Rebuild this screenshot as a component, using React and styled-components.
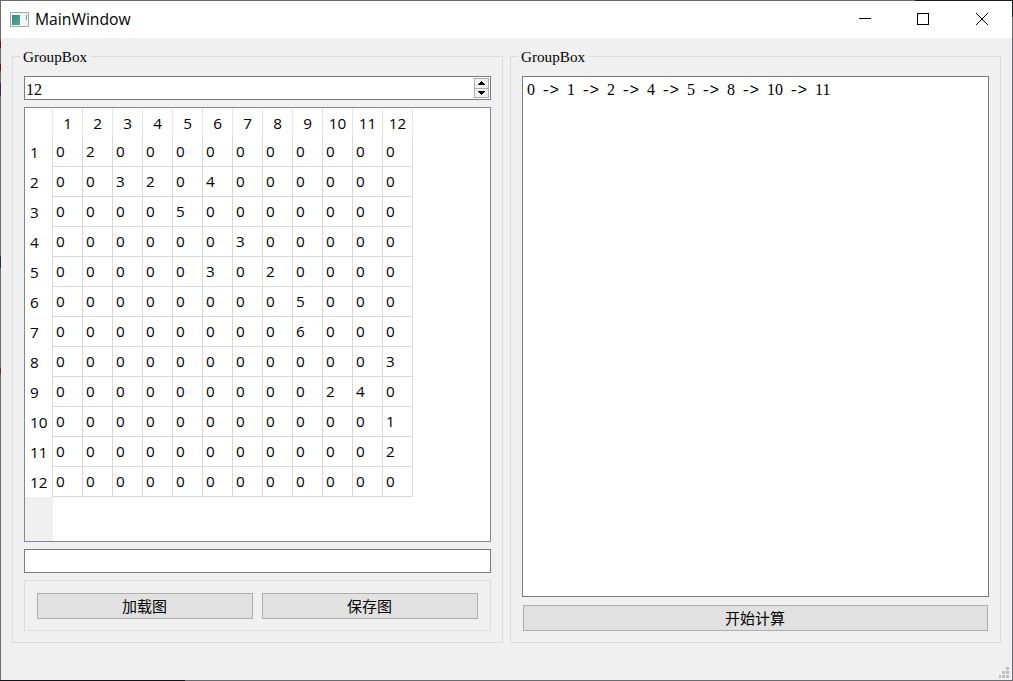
import React from "react";
import styled, { createGlobalStyle } from "styled-components";

const Global = createGlobalStyle`
  *, *::before, *::after { box-sizing: border-box; }
  html, body { margin: 0; padding: 0; overflow: hidden; }
`;

const uiFont = `"Open Sans", "Noto Sans", sans-serif`;
const songFont = `"Liberation Serif", "Noto Sans CJK SC", serif`;

const Frame = styled.div`
  width: 1013px;
  height: 681px;
  padding: 1px;
  color: #000;
  background:
    linear-gradient(90deg, #6b6b6d 0 915px, #1d1a1f 915px) 0 0 / 100% 1px no-repeat,
    linear-gradient(90deg, #141214 0 185px, #6b6b6d 185px) 0 100% / 100% 1px no-repeat,
    linear-gradient(#18191d 0 17px, #6b6b6d 17px) 100% 0 / 1px 100% no-repeat,
    linear-gradient(#6b6b6d 0 41px, #7c0c18 41px 48px, #6b6b6d 48px 64px, #7c0c18 64px 71px,
      #6b6b6d 71px 83px, #3c2850 83px 96px, #6b6b6d 96px 256px, #20305c 256px 268px,
      #6b6b6d 268px 368px, #6b3414 368px 374px, #6b6b6d 374px) 0 0 / 1px 100% no-repeat,
    #6b6b6d;
`;

const Window = styled.div`
  display: flex;
  flex-direction: column;
  height: 100%;
  background: #f0f0f0;
`;

const TitleBar = styled.header`
  display: flex;
  align-items: center;
  height: 37px;
  padding: 0 1px 0 9px;
  background: #fff;
`;

const Title = styled.h1`
  flex: 1;
  margin: 0 0 0 6px;
  font: 400 15.7px/37px ${uiFont};
`;

const CaptionButton = styled.button`
  display: grid;
  place-items: center;
  width: 58.5px;
  height: 37px;
  padding: 0 0 2px;
  border: 0;
  background: transparent;
`;

const Central = styled.main`
  display: flex;
  gap: 7px;
  padding: 18px 11px 0;
`;

const Group = styled.fieldset`
  display: flex;
  flex-direction: column;
  flex: 1;
  min-width: 0;
  height: 587px;
  margin: 0;
  padding: 19px 11px 11px;
  border: 1px solid #dcdcdc;
`;

const GroupTitle = styled.div`
  align-self: flex-start;
  height: 20px;
  margin: -29px 0 9px -4px;
  padding: 0 4px 0 3px;
  background: #f0f0f0;
  font: 15.2px/20px ${songFont};
`;

const SpinBox = styled.div`
  display: flex;
  justify-content: space-between;
  height: 24px;
  padding: 1px;
  border: 1px solid #7a7a7a;
  background: #fff;
  font: 16px/23px ${songFont};
`;

const SpinButtons = styled.div`
  display: flex;
  flex-direction: column;
  width: 15px;
  height: 20px;
  border: 1px solid #acacac;
`;

const SpinButton = styled.button`
  display: grid;
  place-items: center;
  flex: 1;
  padding: 0;
  border: 0;
  background: #f0f0f0;
  & + & { border-top: 1px solid #acacac; }
`;

const TableView = styled.div`
  display: grid;
  grid-template-rows: auto 1fr;
  height: 435px;
  margin-top: 7px;
  border: 1px solid #828790;
  background: #fff;
`;

const Matrix = styled.table`
  width: 388px;
  table-layout: fixed;
  border-collapse: separate;
  border-spacing: 0;
  font: 15.3px/20px ${uiFont};
  letter-spacing: -0.1px;
`;

const ColumnHead = styled.th`
  width: ${(p) => (p.$corner ? 28 : 30)}px;
  height: 29px;
  padding: 0;
  border-right: 1px solid #e5e5e5;
  font-weight: 400;
  text-align: center;
`;

const RowHead = styled.th`
  height: 30px;
  padding: 0 0 0 5px;
  border-right: 1px solid #d8d8d8;
  font-weight: 400;
  text-align: left;
`;

const Cell = styled.td`
  height: 30px;
  padding: 0 0 2px 3px;
  border-right: 1px solid #d8d8d8;
  border-bottom: 1px solid #d8d8d8;
`;

const HeaderRemainder = styled.div`
  width: 28px;
  background: #f0f0f0;
`;

const LineEdit = styled.input`
  height: 24px;
  margin: 7px 0 0;
  padding: 0 3px;
  border: 1px solid #7a7a7a;
  border-radius: 0;
  background: #fff;
  outline: 0;
`;

const ButtonGroup = styled.div`
  display: flex;
  gap: 9px;
  height: 51px;
  margin-top: 7px;
  padding: 12px;
  border: 1px solid #dcdcdc;
`;

const PushButton = styled.button`
  flex: ${(p) => (p.$wide ? "none" : 1)};
  height: 26px;
  margin: ${(p) => (p.$wide ? "8px 1px 0" : 0)};
  padding: 0 1px 0 0;
  border: 1px solid #adadad;
  border-radius: 0;
  background: #e1e1e1;
  color: #000;
  font: 400 15px/24px "Noto Sans CJK SC", sans-serif;
`;

const Output = styled.div`
  height: 521px;
  padding: 1px 4px;
  border: 1px solid #7a7a7a;
  background: #fff;
  font: 16px/23px ${songFont};
  white-space: nowrap;
`;

const Arrow = styled.span`
  display: inline-block;
  width: 32px;
  padding-left: 6px;
  font: 16px/20px "Liberation Mono", monospace;
  letter-spacing: -1.2px;
`;

const GripRow = styled.footer`
  display: flex;
  flex: 1;
  align-items: flex-end;
  justify-content: flex-end;
  padding: 0 3px 2px 0;
`;

const edges = {
  "0,1": 2, "1,2": 3, "1,3": 2, "1,5": 4, "2,4": 5, "3,6": 3, "4,5": 3, "4,7": 2,
  "5,8": 5, "6,8": 6, "7,11": 3, "8,9": 2, "8,10": 4, "9,11": 1, "10,11": 2,
};
const indices = Array.from({ length: 12 }, (_, i) => i);
const path = [0, 1, 2, 4, 5, 8, 10, 11];

const AppIcon = () => (
  <svg width="19" height="16" viewBox="0 0 19 16">
    <defs>
      <linearGradient id="pane" x1="0" y1="0" x2="1" y2="1">
        <stop offset="0" stopColor="#3f7fa3" />
        <stop offset="1" stopColor="#55b077" />
      </linearGradient>
    </defs>
    <rect x="0.5" y="0.5" width="18" height="14" fill="#f3f5f5" stroke="#a3a9ad" />
    <rect x="2" y="3" width="8" height="10" fill="url(#pane)" />
    <rect x="16" y="3" width="1" height="5" fill="#55a58a" />
  </svg>
);

export default function App() {
  return (
    <>
      <Global />
      <Frame>
        <Window>
          <TitleBar>
            <AppIcon />
            <Title>MainWindow</Title>
            <CaptionButton aria-label="Minimize">
              <svg width="12" height="12" shapeRendering="crispEdges"><path d="M0 5.5H12" stroke="#000" /></svg>
            </CaptionButton>
            <CaptionButton aria-label="Maximize">
              <svg width="12" height="12"><rect x="0.5" y="0.5" width="11" height="11" fill="none" stroke="#000" /></svg>
            </CaptionButton>
            <CaptionButton aria-label="Close">
              <svg width="12" height="12"><path d="M0 0L12 12M12 0L0 12" stroke="#000" /></svg>
            </CaptionButton>
          </TitleBar>
          <Central>
            <Group>
              <GroupTitle>GroupBox</GroupTitle>
              <SpinBox>
                12
                <SpinButtons>
                  <SpinButton aria-label="Increase">
                    <svg width="7" height="4" shapeRendering="crispEdges"><path d="M3 0h1v1h1v1h1v1h1v1H0V3h1V2h1V1h1z" /></svg>
                  </SpinButton>
                  <SpinButton aria-label="Decrease">
                    <svg width="7" height="4" shapeRendering="crispEdges"><path d="M0 0h7v1H6v1H5v1H4v1H3V3H2V2H1V1H0z" /></svg>
                  </SpinButton>
                </SpinButtons>
              </SpinBox>
              <TableView>
                <Matrix>
                  <thead>
                    <tr>
                      <ColumnHead $corner />
                      {indices.map((c) => <ColumnHead key={c}>{c + 1}</ColumnHead>)}
                    </tr>
                  </thead>
                  <tbody>
                    {indices.map((r) => (
                      <tr key={r}>
                        <RowHead>{r + 1}</RowHead>
                        {indices.map((c) => <Cell key={c}>{edges[`${r},${c}`] ?? 0}</Cell>)}
                      </tr>
                    ))}
                  </tbody>
                </Matrix>
                <HeaderRemainder />
              </TableView>
              <LineEdit />
              <ButtonGroup>
                <PushButton>加载图</PushButton>
                <PushButton>保存图</PushButton>
              </ButtonGroup>
            </Group>
            <Group>
              <GroupTitle>GroupBox</GroupTitle>
              <Output>
                {path.map((n, i) => (
                  <React.Fragment key={n}>
                    {i > 0 && <Arrow>-&gt;</Arrow>}
                    {n}
                  </React.Fragment>
                ))}
              </Output>
              <PushButton $wide>开始计算</PushButton>
            </Group>
          </Central>
          <GripRow>
            <svg width="11" height="11" fill="#bfbfbf" shapeRendering="crispEdges">
              <path d="M8 0h3v3H8zM4 4h3v3H4zM8 4h3v3H8zM1 8h2v3H1zM4 8h3v3H4zM8 8h3v3H8z" />
            </svg>
          </GripRow>
        </Window>
      </Frame>
    </>
  );
}
